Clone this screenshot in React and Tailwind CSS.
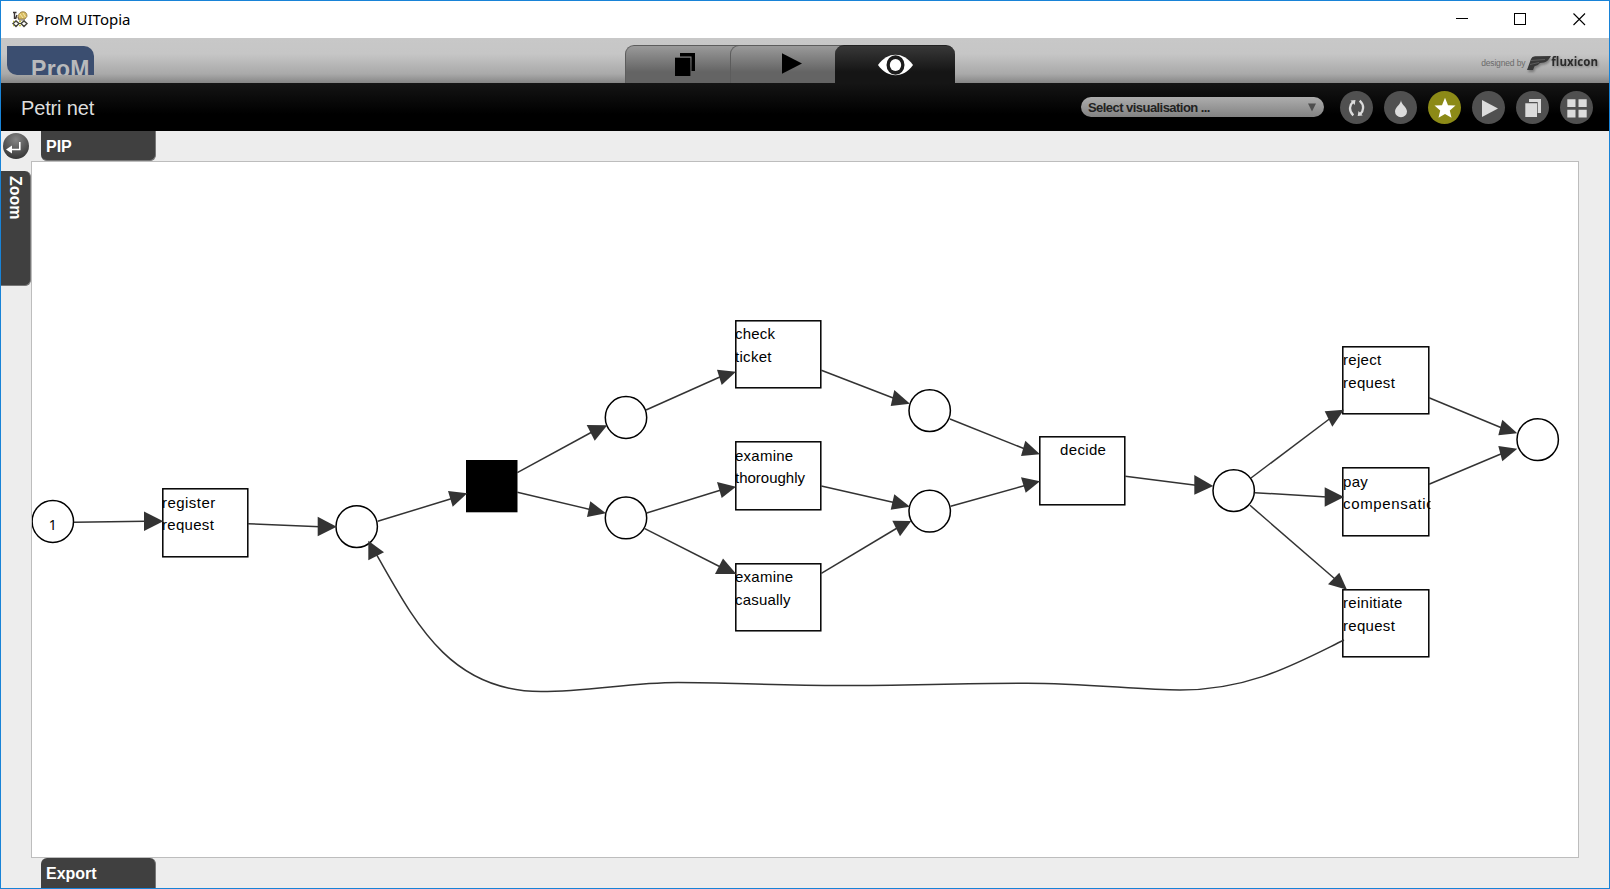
import React, { useState } from "react";

// transitions: outer box + label lines as [text, baseline, letter spacing]
const TRANSITIONS = [
  { id: "register", x: 162, y: 488, w: 86, h: 69, lines: [["register", 508, 0.45], ["request", 530, 0.3]] },
  { id: "check", x: 735, y: 320, w: 86, h: 68, lines: [["check", 339, 0.2], ["ticket", 362, 0.3]] },
  { id: "thoroughly", x: 735, y: 441, w: 86, h: 69, lines: [["examine", 461, 0.25], ["thoroughly", 483, 0]] },
  { id: "casually", x: 735, y: 563, w: 86, h: 68, lines: [["examine", 582, 0.25], ["casually", 605, 0.2]] },
  { id: "decide", x: 1039, y: 436, w: 86, h: 69, dx: 21, lines: [["decide", 455, 0.35]] },
  { id: "reject", x: 1342, y: 346, w: 87, h: 68, dx: 1, lines: [["reject", 365, 0.3], ["request", 388, 0.3]] },
  { id: "pay", x: 1342, y: 467, w: 87, h: 69, dx: 1, lines: [["pay", 487, 0.3], ["compensation", 509, 0.65]] },
  { id: "reinitiate", x: 1342, y: 589, w: 87, h: 68, dx: 1, lines: [["reinitiate", 608, 0.3], ["request", 631, 0.3]] },
];

const PLACES = [
  { x: 52.8, y: 521.5, tokens: 1 },
  { x: 356.7, y: 526.6 },
  { x: 626, y: 417.5 },
  { x: 626, y: 517.9 },
  { x: 929.7, y: 410.6 },
  { x: 929.7, y: 511.2 },
  { x: 1233.7, y: 490.6 },
  { x: 1537.7, y: 439.6 },
];

// arcs: path + arrow head triangle
const ARCS = [
  { d: "M74 522.3L146 521.3", head: "144,511.5 144,531 163.3,521.3" },
  { d: "M248 523.7L320 526.7", head: "317.7,516.7 317.7,536.3 336.7,526.7" },
  { d: "M377.7 521.3L452 498.5", head: "448,491 452.7,506.7 467.3,493.3" },
  { d: "M517.3 472.7L592 432", head: "586.7,425 594.7,440.7 607.3,425.3" },
  { d: "M517.3 492.3L590 509.4", head: "590.3,501.3 587,517 606,513.3" },
  { d: "M646 410L721 376.5", head: "717,369.7 721.7,385 736,371.7" },
  { d: "M646.7 513L721 490", head: "717,482 721.7,498 736,486.7" },
  { d: "M644.3 528.3L720.5 567", head: "723,558.5 715,574 736.3,574" },
  { d: "M821.3 370.3L894.5 398.5", head: "894.3,390 890.7,406 910,403.7" },
  { d: "M821.3 486L894 502.4", head: "894.3,494.3 890.7,509.7 910,506.7" },
  { d: "M821.3 573.3L898 527.5", head: "892.3,520.7 900,536.3 911.3,521" },
  { d: "M950 419L1025 449", head: "1025.3,440.7 1021,456 1040,454.3" },
  { d: "M950.7 506.3L1025 485.5", head: "1021,477.3 1025.7,492.7 1040,481.3" },
  { d: "M1125.3 476.3L1196 485.2", head: "1194.3,475 1194.3,494.7 1213.3,486" },
  { d: "M1251 478L1330 418.5", head: "1324.7,411.3 1332.3,426.7 1344,409.7" },
  { d: "M1254.7 492.7L1327 497", head: "1324.7,487.3 1324.7,506.7 1344,497" },
  { d: "M1250 505.3L1335 579", head: "1339.3,572.7 1328,584.3 1347,589.7" },
  { d: "M1429 397.7L1502 428", head: "1502.3,419.7 1498.3,435.3 1517.3,433.3" },
  { d: "M1429 484.3L1502 453.5", head: "1498.3,446 1502.3,461.3 1517.3,448.7" },
  {
    d: "M1344 640C1295 664 1250 690 1180 690C1140 690 1085 683.3 1027 683.3C960 683.3 905 685.5 842 685.5C770 685.5 730 682.5 678 682.5C630 682.5 590 691.5 541 691.5C450 691.5 415 622 377.7 556.7L375 552",
    head: "368.3,540.7 368.3,560.3 384,552.3",
  },
];

function PetriNet() {
  return (
    <svg viewBox="32 162 1546 695" className="block h-full w-full font-['Liberation_Sans',Arial,sans-serif] text-[15px]">
      {TRANSITIONS.map((t) => (
        <rect key={t.id} x={t.x + 0.8} y={t.y + 0.8} width={t.w - 1} height={t.h - 1} fill="#fff" stroke="#000" strokeWidth="1.5" />
      ))}
      <rect x="466" y="460" width="51.5" height="52.3" fill="#000" />
      {PLACES.map((p, i) => (
        <ellipse key={i} cx={p.x} cy={p.y} rx="20.7" ry="20.9" fill="#fff" stroke="#000" strokeWidth="1.5" />
      ))}
      {ARCS.map((a, i) => (
        <g key={i}>
          <path d={a.d} fill="none" stroke="#333" strokeWidth="1.5" />
          <polygon points={a.head} fill="#333" />
        </g>
      ))}
      {TRANSITIONS.map((t) => (
        <g key={t.id}>
          <clipPath id={`clip-${t.id}`}>
            <rect x={t.x} y={t.y} width={t.w + 1.5} height={t.h} />
          </clipPath>
          <g clipPath={`url(#clip-${t.id})`}>
            {t.lines.map(([text, y, spacing]) => (
              <text key={y} x={t.x + (t.dx || 0)} y={y} letterSpacing={spacing}>{text}</text>
            ))}
          </g>
        </g>
      ))}
      {PLACES.filter((p) => p.tokens).map((p) => (
        <text key={p.x} x={p.x - 4} y={p.y + 8.5} className="font-['Noto_Sans',sans-serif] text-[14px]">{p.tokens}</text>
      ))}
    </svg>
  );
}

function AppIcon() {
  return (
    <svg width="16" height="17" viewBox="0 0 16 17">
      <path d="M1 1.5h3.5M2.5 1v7M5 4l-1.5 4" stroke="#3c3434" strokeWidth="1.4" fill="none" />
      <path d="M6 7.5C6 3 8 .8 11 .8s4 2 4 4.5l-2 2.7H7z" fill="#d9bd62" stroke="#8d7440" strokeWidth=".8" />
      <path d="M8 3l3 4M11 2l2.5 4" stroke="#f5e7ae" strokeWidth="1" />
      <path d="M6 6l1 3h6" stroke="#7a6a55" strokeWidth="1" fill="none" />
      <path d="M1 12.5l3-2.5 3 2.5-3 3z M9 12.5l3-2.5 3 2.5-3 3z" fill="#fff" stroke="#45453c" strokeWidth="1.4" />
      <path d="M7 12.5h2" stroke="#45453c" />
      <path d="M1 10.5h1M7 10.5h2M1 14.5h1M7 14.5h2" stroke="#c5c43d" strokeWidth="1.5" />
    </svg>
  );
}

function TitleBar() {
  return (
    <div className="flex h-[37px] items-center bg-white pl-[11px] pr-[23px]">
      <AppIcon />
      <span className="ml-[7px] font-['Noto_Sans',sans-serif] text-[15px] leading-none text-black">ProM UITopia</span>
      <div className="ml-auto flex gap-[46px]">
        <svg width="13" height="13" viewBox="0 0 13 13"><path d="M1 5.5h12" stroke="#000" /></svg>
        <svg width="13" height="13" viewBox="0 0 13 13"><rect x=".5" y=".5" width="11" height="11" fill="none" stroke="#000" shapeRendering="crispEdges" /></svg>
        <svg width="13" height="13" viewBox="0 0 13 13"><path d="M.5 .5l11.5 11.5M12 .5l-11.5 11.5" stroke="#000" strokeWidth="1.1" /></svg>
      </div>
    </div>
  );
}

const TABS = [
  {
    id: "workspace",
    icon: (
      <svg width="20" height="23" viewBox="0 0 20 23" className="ml-[4px]">
        <path d="M5 0h15v18h-3.500V3.500H5z" fill="#000" />
        <rect y="4.700" width="15.400" height="18.300" fill="#000" />
      </svg>
    ),
  },
  { id: "actions", icon: <svg width="20" height="21" viewBox="0 0 20 21" className="ml-[7px] -mt-[2px]"><path d="M0 .3v20.400l20-10.200z" fill="#000" /></svg> },
  {
    id: "views",
    icon: (
      <svg width="35" height="22" viewBox="0 0 35 22">
        <path d="M0 11C5 4 11 .8 17.5 .8S30 4 35 11C30 18 24 21.2 17.5 21.2S5 18 0 11z" fill="#fff" />
        <ellipse cx="17.5" cy="11" rx="9" ry="9.8" fill="#1c1c1c" />
        <ellipse cx="17.5" cy="11" rx="5.7" ry="6" fill="#fff" />
      </svg>
    ),
  },
];

function Header({ tab, onTab }) {
  return (
    <div className="flex h-[45px] items-end bg-[linear-gradient(#c8c8c8_0%,#c6c6c6_35%,#a9a9a9_80%,#868686_100%)] pr-[11px]">
      <div className="mb-2 ml-[6px] h-[29px] w-[87px] overflow-hidden rounded-bl-[10px] rounded-tr-[10px] bg-[#3b4e70] pl-[24px] pt-[13px]">
        <div className="font-['Liberation_Sans',Arial,sans-serif] text-[23px] font-bold leading-[21px] tracking-[0.3px] text-[#b9babb]">ProM</div>
      </div>
      <div className="ml-[531px] flex h-[38px] w-[330px]">
        {TABS.map((t) => (
          <button
            key={t.id}
            onClick={() => onTab(t.id)}
            className={
              t.id === tab
                ? "z-10 flex w-[120px] items-center justify-center rounded-t-[9px] border-t border-[#222] bg-[linear-gradient(#383838,#151515_70%)]"
                : "-mr-[10px] flex w-[115px] items-center justify-center rounded-tl-[9px] border-l border-t border-[#5c5c5c] bg-[linear-gradient(#9a9a9a,#646464_70%)]"
            }
          >
            {t.icon}
          </button>
        ))}
      </div>
      <div className="mb-[11px] ml-auto flex items-center">
        <span className="font-['Liberation_Sans',Arial,sans-serif] text-[8.5px] leading-4 tracking-[-0.15px] text-[#6a6a6a]">designed by</span>
        <svg width="26" height="18" viewBox="0 0 26 18" className="ml-px drop-shadow-[1px_2px_1px_rgba(0,0,0,0.3)]">
          <path d="M1 16L5 5Q6 2.5 9 2.3L25 2Q22 7.5 18 8.5L14 9Q12 11.8 8.5 12.3L7 16z" fill="#383838" />
          <path d="M5 6.5l14-1M4 10.5l9-2" stroke="#666" strokeWidth=".8" />
        </svg>
        <span className="-mt-[2px] -ml-[1px] font-['Open_Sans',sans-serif] text-[11.5px] font-bold leading-4 tracking-[0.05px] text-[#2b2b2b] drop-shadow-[1px_1px_1px_rgba(0,0,0,0.3)]">fluxicon</span>
      </div>
    </div>
  );
}

const TOOLS = [
  {
    id: "refresh",
    icon: (
      <>
        <path d="M13.3 24.3Q9.8 21 10 17Q10.2 13.2 13 10.8M19.7 9.7Q23.3 13 23.1 17Q22.9 20.8 20.2 23.2" fill="none" stroke="#dcdcdc" strokeWidth="2.3" />
        <path d="M10.5 9.5l5-.5-.8 5zM22.7 24.6l-5 .4.8-5z" fill="#dcdcdc" />
      </>
    ),
  },
  { id: "drop", icon: <path d="M17 9C17 13.5 23 16 23 20.5A6 5.7 0 0 1 11 20.5C11 16 17 13.5 17 9z" fill="#dcdcdc" /> },
  { id: "favorite", icon: <path d="M17 6.7l3 7.5 7.5.4-5.7 4.9 1.7 7.3L17 23l-6.5 3.8 1.7-7.3-5.7-4.9 7.5-.4z" fill="#fff" /> },
  { id: "play", icon: <path d="M10 9v17l16-8.5z" fill="#dcdcdc" /> },
  { id: "copy", icon: <path d="M13 8h12v14h-3.3V11H13zM9.3 12.3H21V26H9.3z" fill="#dcdcdc" /> },
  { id: "grid", icon: <path d="M7.3 8.3h8.2V16H7.3zM18.5 8.3h8.2V16h-8.2zM7.3 18.7h8.2v7.8H7.3zM18.5 18.7h8.2v7.8h-8.2z" fill="#dcdcdc" /> },
];

function Toolbar() {
  return (
    <div className="flex h-12 items-center bg-[linear-gradient(#151515,#000_65%)] pl-[20px] pr-4">
      <h1 className="mt-[2px] font-['Liberation_Sans',Arial,sans-serif] text-[20px] leading-none tracking-[-0.15px] text-[#dedede]">Petri net</h1>
      <button className="ml-auto mr-4 flex h-[20px] w-[243px] items-center justify-between rounded-full bg-[linear-gradient(#adadad,#828282)] pl-[7px] pr-2">
        <span className="mt-px font-['Liberation_Sans',Arial,sans-serif] text-[13px] font-bold leading-none tracking-[-0.55px] text-[#222]">Select visualisation ...</span>
        <svg width="8" height="9" viewBox="0 0 8 9"><path d="M0 .5h8L4 8.5z" fill="#4e4e4e" /></svg>
      </button>
      <div className="flex gap-[11px]">
        {TOOLS.map((t) => (
          <button key={t.id} className={t.id === "favorite" ? "h-[33px] w-[33px] rounded-full bg-[#8c8a17]" : "h-[33px] w-[33px] rounded-full bg-[#505050]"}>
            <svg width="33" height="33" viewBox="0 0 33 33">{t.icon}</svg>
          </button>
        ))}
      </div>
    </div>
  );
}

export default function App() {
  const [tab, setTab] = useState("views");

  return (
    <div className="flex h-[889px] w-[1610px] flex-col overflow-hidden border border-[#1883d7] bg-[#ededed]">
      <TitleBar />
      <Header tab={tab} onTab={setTab} />
      <Toolbar />

      {/* top strip: back button and PIP drawer */}
      <div className="flex h-[30px]">
        <button className="ml-[2px] mt-[2px] h-[26px] w-[26px] rounded-full bg-[radial-gradient(circle_at_50%_25%,#858585,#262626)]">
          <svg width="26" height="26" viewBox="0 0 26 26">
            <path d="M16.8 9v7.5H8" fill="none" stroke="#fff" strokeWidth="1.6" />
            <path d="M3 16.5l6-4v8z" fill="#fff" />
          </svg>
        </button>
        <div className="ml-[12px] h-[29.5px] w-[115px] rounded-b-[6px] border-b border-r border-[#777] bg-[#404040] pl-[5px] font-['Liberation_Sans',Arial,sans-serif] text-[16px] font-bold leading-[31px] text-white">PIP</div>
      </div>

      <div className="flex h-[697px]">
        <div className="w-[30px] pt-[10px]">
          <div className="h-[115px] w-[30px] rounded-r-[6px] border-b border-r border-[#777] bg-[#404040] pl-[4px] pt-[5px]">
            <span className="block w-[20px] font-['Liberation_Sans',Arial,sans-serif] text-[16px] font-bold leading-[20px] text-white [writing-mode:vertical-rl]">Zoom</span>
          </div>
        </div>
        <div className="h-[697px] w-[1548px] border border-[#bdbdbd] bg-white">
          <PetriNet />
        </div>
      </div>

      <div className="flex h-[30px] pl-[40px]">
        <div className="w-[115px] rounded-t-[6px] border-r border-[#777] bg-[#404040] pl-[5px] font-['Liberation_Sans',Arial,sans-serif] text-[16px] font-bold leading-[31px] text-white">Export</div>
      </div>
    </div>
  );
}
